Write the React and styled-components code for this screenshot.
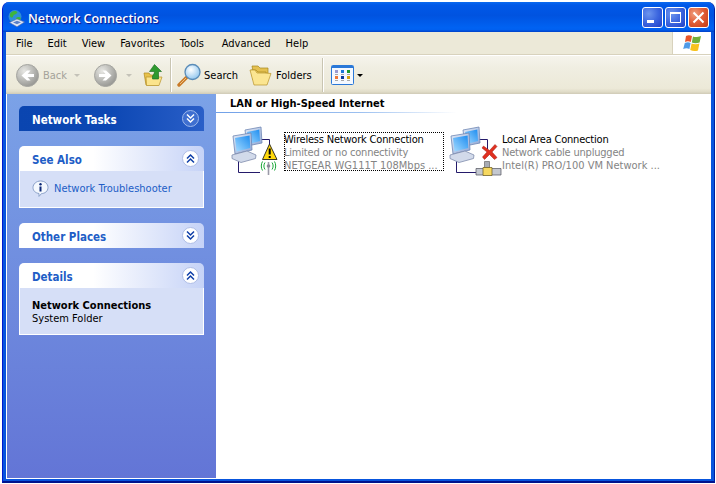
// App.jsx
import React from 'react';
import styled, { createGlobalStyle } from 'styled-components';

const GlobalStyle = createGlobalStyle`
  html, body {
    margin: 0;
    padding: 0;
    background: #fff;
    overflow: hidden;
  }
  * {
    box-sizing: border-box;
  }
`;

const FONT = `"DejaVu Sans Condensed", "Liberation Sans", sans-serif`;

const Page = styled.div`
  width: 716px;
  height: 484px;
  padding: 2px 1px 1px 2px;
  font-family: ${FONT};
  font-size: 11px;
  color: #000;
`;
const Window = styled.div`
  width: 713px;
  height: 481px;
  display: flex;
  flex-direction: column;
  background: #0855dd;
  border-left: 1px solid #0019cf;
  border-right: 1px solid #001ea0;
  border-bottom: 2px solid #00138c;
  border-radius: 7px 7px 0 0;
`;
const TitleBar = styled.div`
  height: 30px;
  flex: none;
  display: flex;
  align-items: center;
  padding: 0 5px 0 5px;
  border-radius: 7px 7px 0 0;
  background: linear-gradient(180deg, #0a6af0 0, #0058e8 3px, #0053e0 45%, #0062f2 85%, #0060f0 92%, #0040c8 100%);
`;
const TitleText = styled.span`
  margin-left: 3px;
  padding-top: 3px;
  font-family: "Open Sans", sans-serif;
  font-weight: 600;
  font-size: 12.5px;
  color: #fff;
  text-shadow: 1px 1px 1px #0f1089;
`;
const TitleButtons = styled.div`
  margin-left: auto;
  display: flex;
  gap: 2px;
  margin-top: 1px;
`;
const TitleButton = styled.div`
  width: 21px;
  height: 21px;
  border: 1px solid #fff;
  border-radius: 3px;
  display: flex;
  align-items: center;
  justify-content: center;
  background: ${(props) =>
    props.$close
      ? 'radial-gradient(circle at 30% 30%, #f0a080 0, #e2603a 45%, #c63a12 100%)'
      : 'radial-gradient(circle at 30% 30%, #6d95ee 0, #3c66df 50%, #2140c8 100%)'};
`;
const Inner = styled.div`
  flex: 1;
  min-height: 0;
  margin: 0 3px 2px 3px;
  display: flex;
  flex-direction: column;
  background: #fff;
`;
const MenuBar = styled.div`
  height: 23px;
  flex: none;
  display: flex;
  align-items: center;
  gap: 15px;
  padding-left: 10px;
  background: #ece9d8;
  border-bottom: 1px solid #d8d2bd;
`;
const MenuItem = styled.span`
  min-width: ${(props) => props.$minWidth || 0}px;
`;
const FlagBox = styled.div`
  margin-left: auto;
  width: 39px;
  height: 22px;
  background: #fff;
  border-left: 1px solid #d8d2bd;
  display: flex;
  align-items: center;
  justify-content: center;
`;
const Toolbar = styled.div`
  height: 39px;
  flex: none;
  display: flex;
  align-items: center;
  padding-left: 10px;
  background: linear-gradient(180deg, #f6f4ec 0, #f0eee2 30%, #ece9d8 85%, #e0dcc8 94%, #cfcab6 100%);
  border-top: 1px solid #fff;
`;
const ToolLabel = styled.span`
  color: ${(props) => (props.$disabled ? '#a4a29a' : '#000')};
  margin-left: ${(props) => props.$ml || 3}px;
`;
const Caret = styled.span`
  width: 0;
  height: 0;
  margin-left: ${(props) => props.$ml}px;
  margin-right: ${(props) => props.$mr || 0}px;
  border-left: 3px solid transparent;
  border-right: 3px solid transparent;
  border-top: 3px solid ${(props) => (props.$dark ? '#000' : '#c4c2b8')};
`;
const ToolSep = styled.span`
  width: 2px;
  height: 34px;
  margin: 0 ${(props) => props.$right}px 0 ${(props) => props.$left}px;
  background: #c9c5b2;
  border-right: 1px solid #fff;
`;
const Main = styled.div`
  flex: 1;
  min-height: 0;
  display: flex;
  border-left: 1px solid #fff;
  border-bottom: 1px solid #fff;
`;
const Sidebar = styled.div`
  width: 209px;
  flex: none;
  padding: 12px 12px 0 12px;
  display: flex;
  flex-direction: column;
  gap: 15px;
  background: linear-gradient(180deg, #7ba2e7 0, #6375d6 100%);
`;
const Task = styled.div`
  width: 185px;
`;
const TaskHeader = styled.div`
  height: 25px;
  display: flex;
  align-items: center;
  justify-content: space-between;
  padding: 0 5px 0 13px;
  border-radius: 5px 5px 0 0;
  font-weight: 700;
  color: ${(props) => (props.$primary ? '#fff' : '#215dc6')};
  background: ${(props) =>
    props.$primary
      ? 'linear-gradient(90deg, #0a45b0 0, #0d48b4 50%, #2a5fc8 100%)'
      : 'linear-gradient(90deg, #fff 0, #fff 40%, #c6d3f7 100%)'};
`;
const TaskTitle = styled.span`
  font-size: 11.5px;
  padding-top: 2px;
`;
const TaskBody = styled.div`
  background: #d6dff7;
  border: 1px solid #fff;
  border-top: 0;
  padding: ${(props) => props.$pad};
`;
const LinkRow = styled.div`
  display: flex;
  align-items: center;
  gap: 5px;
  color: #215dc6;
`;
const DetailName = styled.div`
  font-weight: 700;
  line-height: 13px;
`;
const DetailKind = styled.div`
  line-height: 13px;
`;
const Content = styled.div`
  flex: 1;
  min-width: 0;
  background: #fff;
`;
const GroupHeading = styled.div`
  height: 19px;
  padding: 3px 0 0 14px;
  font-weight: 700;
  font-size: 11px;
  line-height: 14px;
  border-bottom: 1px solid;
  border-image: linear-gradient(90deg, #70a0e8 0, #9cc0f0 60%, #fff 100%) 1;
  width: 240px;
`;
const Items = styled.div`
  display: flex;
  gap: 2px;
  padding: 12px 0 0 12px;
`;
const Item = styled.div`
  width: 216px;
  height: 52px;
  display: flex;
  align-items: center;
`;
const ItemIcon = styled.div`
  width: 56px;
  height: 52px;
  flex: none;
`;
const ItemText = styled.div`
  width: 160px;
  height: 39px;
  padding-top: 1px;
  outline: ${(props) => (props.$focused ? '1px dotted #000' : 'none')};
  outline-offset: -1px;
`;
const ItemLine = styled.div`
  height: 13px;
  line-height: 13px;
  white-space: nowrap;
  letter-spacing: ${(props) => (props.$tight ? '-0.2px' : '0')};
  color: ${(props) => (props.$muted ? '#848484' : '#000')};
`;
const Svg = styled.svg`
  display: block;
  flex: none;
  margin: ${(props) => props.$margin || '0'};
`;

const Chevrons = ({ up, primary }) => {
  const color = primary ? '#fff' : '#0f3fa8';
  const a = up ? 'M5 8.5 8.5 5 12 8.5M5 12.5 8.5 9 12 12.5' : 'M5 4.5 8.5 8 12 4.5M5 8.5 8.5 12 12 8.5';
  return (
    <Svg width="17" height="17" viewBox="0 0 17 17">
      <circle cx="8.5" cy="8.5" r="8" fill={primary ? '#3f6fd0' : '#fff'} stroke={primary ? '#9db8ea' : '#aebde6'} />
      <path d={a} fill="none" stroke={color} strokeWidth="1.5" />
    </Svg>
  );
};

const SectionTask = ({ title, primary, up, children, pad }) => (
  <Task>
    <TaskHeader $primary={primary}>
      <TaskTitle>{title}</TaskTitle>
      <Chevrons up={up} primary={primary} />
    </TaskHeader>
    {children && <TaskBody $pad={pad}>{children}</TaskBody>}
  </Task>
);

const XpLogo = () => (
  <Svg width="20" height="18" viewBox="0 0 20 18">
    <path d="M4 2C6 .8 8 1 10 2L8.8 8C6.8 7 5 7 3 8Z" fill="#e8552a" />
    <path d="M11 2.4C13 3.4 15 3.4 19 2L17.6 8.4C15 9.4 12 9.4 9.8 8.4Z" fill="#6fb03a" />
    <path d="M2.8 9C5 8 7 8 8.6 9L7.4 15C5.5 14 3.4 14 1.2 15Z" fill="#4f9be8" />
    <path d="M9.6 9.4C12 10.4 15 10.4 17.4 9.4L16 16.4C13.5 17.4 10.5 17.2 8.2 16Z" fill="#f8c21c" />
  </Svg>
);

const TitleIcon = () => (
  <Svg width="17" height="17" viewBox="0 0 17 17" $margin="3px 0 0 0">
    <circle cx="7" cy="6.5" r="6.5" fill="#2f8fd8" />
    <path d="M2 4C3.5.8 8 .2 9.4 2.5 8 5 5 4 5 7 3 8.5 1.4 6.5 2 4ZM8 8C10 6.5 12 7 13 8.5 11.5 11 9 11 8 8Z" fill="#3fb53a" />
    <path d="M1.5 12.5 9 9 16.5 12 9 16.8Z" fill="#dfe7f5" stroke="#5a6fa8" strokeWidth=".6" />
    <path d="M5 12.5 9 10.8 13 12.2 9 14.2Z" fill="#5a80c8" />
  </Svg>
);

const NavButton = ({ flip }) => (
  <Svg width="23" height="23" viewBox="0 0 23 23">
    <defs>
      <radialGradient id="navGrey" cx="35%" cy="30%" r="80%">
        <stop offset="0" stopColor="#e8e8e4" />
        <stop offset="1" stopColor="#8f8f8b" />
      </radialGradient>
    </defs>
    <circle cx="11.5" cy="11.5" r="11" fill="url(#navGrey)" stroke="#a5a5a0" />
    <path
      d={flip ? 'M5 10H11.5L8.5 6.5H12L17.5 11.5 12 16.5H8.5L11.5 13H5Z' : 'M18 10H11.5L14.5 6.5H11L5.5 11.5 11 16.5H14.5L11.5 13H18Z'}
      fill="#fff"
    />
  </Svg>
);

const FolderUp = () => (
  <Svg width="20" height="23" viewBox="0 0 20 23">
    <path d="M1 9H6L7.5 11H15V21H3Z" fill="#e8c24a" stroke="#b08a20" strokeWidth=".7" />
    <path d="M3 13H19L16 21.5H3.5Z" fill="#fbe48c" stroke="#b8922a" strokeWidth=".7" />
    <path d="M11.5 .5 18.5 7.5H15.5V15H9.5V12C10 11 11.5 10 11.5 7.5H6.5Z" fill="#2f9a2f" stroke="#166a1c" strokeWidth=".6" />
  </Svg>
);

const SearchIcon = () => (
  <Svg width="25" height="25" viewBox="0 0 25 25">
    <defs>
      <radialGradient id="lens" cx="40%" cy="35%" r="70%">
        <stop offset="0" stopColor="#fff" />
        <stop offset="1" stopColor="#8cc4ee" />
      </radialGradient>
    </defs>
    <path d="M9.5 14.5 2 22" stroke="#c87a28" strokeWidth="3.4" strokeLinecap="round" />
    <path d="M9 15 3 21" stroke="#f0c080" strokeWidth="1" />
    <circle cx="15.5" cy="9" r="7.5" fill="url(#lens)" stroke="#5a8cb8" strokeWidth="1.3" />
  </Svg>
);

const FoldersIcon = () => (
  <Svg width="23" height="23" viewBox="0 0 23 23" $margin="0 0 0 11px">
    <path d="M3 2H9L11 4H19V13H5Z" fill="#e4c050" stroke="#a8861e" strokeWidth=".7" />
    <path d="M2 6H7L9 8H17V16H4Z" fill="#f0d268" stroke="#a8861e" strokeWidth=".7" />
    <path d="M1 6H6L8 9H16L22 9.5 18 21H5Z" fill="#fbe591" stroke="#b8922a" strokeWidth=".7" />
  </Svg>
);

const ViewsIcon = () => {
  const cells = ['#9a9ad0', '#1c78d8', '#1c9a30', '#f07838', '#0c3a9a', '#d8a010'];
  return (
    <Svg width="23" height="20" viewBox="0 0 23 20">
      <rect x=".5" y=".5" width="22" height="19" rx="1" fill="#f4f8ff" stroke="#2a78d8" />
      <rect x="1" y="1" width="21" height="2" fill="#2a78d8" />
      {cells.map((c, i) => (
        <rect key={c} x={4 + (i % 3) * 6} y={5 + Math.floor(i / 3) * 6} width="3" height="3" fill={c} />
      ))}
      <path d="M4 9.5H7M10 9.5H13M16 9.5H19M4 15.5H7M10 15.5H13M16 15.5H19" stroke="#a8a8a8" />
    </Svg>
  );
};

const InfoIcon = () => (
  <Svg width="17" height="17" viewBox="0 0 17 17">
    <path d="M8.5 1C12.6 1 16 3.6 16 7.5S12.6 13.6 9.5 13.6L7 16.4V13.5C3.6 13 1 11 1 7.5S4.4 1 8.5 1Z" fill="#f4f8fe" stroke="#8aa0c8" />
    <path d="M8.5 6.5V11.5" stroke="#0e2a78" strokeWidth="2" />
    <circle cx="8.5" cy="4.2" r="1.2" fill="#0e2a78" />
  </Svg>
);

const Computers = ({ id }) => (
  <g>
    <defs>
      <linearGradient id={id} x1="0" y1="1" x2="1" y2="0">
        <stop offset="0" stopColor="#a6dcff" />
        <stop offset="1" stopColor="#1c8cf0" />
      </linearGradient>
      <linearGradient id={`${id}f`} x1="0" y1="0" x2="1" y2="1">
        <stop offset="0" stopColor="#e4ecf8" />
        <stop offset="1" stopColor="#8fa6d4" />
      </linearGradient>
    </defs>
    <path d="M32 14.5H41.5V24M10.5 36V47.5H32" fill="none" stroke="#241a6a" />
    <path d="M17 5 33 2 34 18 19 21Z" fill={`url(#${id}f)`} stroke="#6f86b4" strokeWidth=".8" />
    <path d="M19 7 31.3 4.6 32 16 21 19Z" fill={`url(#${id})`} />
    <path d="M5 11 23 8 24 25 7 29Z" fill={`url(#${id}f)`} stroke="#6f86b4" strokeWidth=".8" />
    <path d="M7 13 21.6 10.5 22.2 23 8.5 26.5Z" fill={`url(#${id})`} />
    <path d="M4 30 19 26 28 30 27.5 33.5 13 37.5 4 33.5Z" fill="#d2daea" stroke="#7f8cac" strokeWidth=".8" />
  </g>
);

const WirelessIcon = () => (
  <Svg width="56" height="52" viewBox="0 0 56 52">
    <Computers id="scrA" />
    <path d="M41.5 19 49 34.5H34.5Z" fill="#ffd80a" stroke="#3a3520" strokeLinejoin="round" />
    <path d="M41.7 23.5V29.5M41.7 31V33" stroke="#000" strokeWidth="2" />
    <path d="M40.5 37V50" stroke="#9a9aa8" strokeWidth="1.6" />
    <circle cx="40.5" cy="41" r="1.8" fill="#8a8a98" />
    <path d="M37 37.5C35.5 39.5 35.5 42.5 37 44.5M44 37.5C45.5 39.5 45.5 42.5 44 44.5M34.5 36.5C32.9 39 32.9 43 34.5 45.5M46.5 36.5C48.1 39 48.1 43 46.5 45.5" fill="none" stroke="#1aa83a" />
  </Svg>
);

const WiredIcon = () => (
  <Svg width="56" height="52" viewBox="0 0 56 52">
    <Computers id="scrB" />
    <path d="M38.5 36.5H43.5V43H38.5Z" fill="#a8acb4" stroke="#555" strokeWidth=".6" />
    <path d="M30 43.5H55V50H30Z" fill="#c4c8d0" stroke="#50525c" strokeWidth=".7" />
    <path d="M37 42.5H46V50.5H37Z" fill="#f6d860" stroke="#6a5a20" strokeWidth=".7" />
    <path d="M37.5 21 43.5 25.5 49 19.5 51 21.5 46 27 51 32.5 48.5 34.5 43.5 29.5 38.5 34.5 36.5 32 41 27 36 23Z" fill="#e03020" stroke="#a01810" strokeWidth=".5" />
  </Svg>
);

const App = () => {
  return (
    <Page>
      <GlobalStyle />
      <Window>
        <TitleBar>
          <TitleIcon />
          <TitleText>Network Connections</TitleText>
          <TitleButtons>
            <TitleButton>
              <Svg width="19" height="19" viewBox="0 0 19 19">
                <rect x="4" y="12" width="7" height="3" fill="#fff" />
              </Svg>
            </TitleButton>
            <TitleButton>
              <Svg width="19" height="19" viewBox="0 0 19 19">
                <path d="M4.5 5.5H14.5V14.5H4.5ZM4 4.5H15" fill="none" stroke="#fff" />
                <rect x="4" y="4" width="11" height="2" fill="#fff" />
              </Svg>
            </TitleButton>
            <TitleButton $close>
              <Svg width="19" height="19" viewBox="0 0 19 19">
                <path d="M4.5 4.5 14.5 14.5M14.5 4.5 4.5 14.5" stroke="#fff" strokeWidth="2" />
              </Svg>
            </TitleButton>
          </TitleButtons>
        </TitleBar>
        <Inner>
          <MenuBar>
            <MenuItem>File</MenuItem>
            <MenuItem>Edit</MenuItem>
            <MenuItem>View</MenuItem>
            <MenuItem>Favorites</MenuItem>
            <MenuItem $minWidth={27}>Tools</MenuItem>
            <MenuItem>Advanced</MenuItem>
            <MenuItem>Help</MenuItem>
            <FlagBox>
              <XpLogo />
            </FlagBox>
          </MenuBar>
          <Toolbar>
            <NavButton />
            <ToolLabel $disabled $ml={4}>Back</ToolLabel>
            <Caret $ml={7} $mr={14} />
            <NavButton flip />
            <Caret $ml={9} $mr={11} />
            <FolderUp />
            <ToolSep $left={7} $right={5} />
            <SearchIcon />
            <ToolLabel $ml={2}>Search</ToolLabel>
            <FoldersIcon />
            <ToolLabel $ml={4}>Folders</ToolLabel>
            <ToolSep $left={10} $right={7} />
            <ViewsIcon />
            <Caret $ml={3} $dark />
          </Toolbar>
          <Main>
            <Sidebar>
              <SectionTask title="Network Tasks" primary />
              <SectionTask title="See Also" up pad="9px 0 10px 12px">
                <LinkRow>
                  <InfoIcon />
                  Network Troubleshooter
                </LinkRow>
              </SectionTask>
              <SectionTask title="Other Places" />
              <SectionTask title="Details" up pad="11px 0 9px 12px">
                <DetailName>Network Connections</DetailName>
                <DetailKind>System Folder</DetailKind>
              </SectionTask>
            </Sidebar>
            <Content>
              <GroupHeading>LAN or High-Speed Internet</GroupHeading>
              <Items>
                <Item>
                  <ItemIcon>
                    <WirelessIcon />
                  </ItemIcon>
                  <ItemText $focused>
                    <ItemLine $tight>Wireless Network Connection</ItemLine>
                    <ItemLine $tight $muted>Limited or no connectivity</ItemLine>
                    <ItemLine $muted>NETGEAR WG111T 108Mbps ...</ItemLine>
                  </ItemText>
                </Item>
                <Item>
                  <ItemIcon>
                    <WiredIcon />
                  </ItemIcon>
                  <ItemText>
                    <ItemLine $tight>Local Area Connection</ItemLine>
                    <ItemLine $tight $muted>Network cable unplugged</ItemLine>
                    <ItemLine $muted>Intel(R) PRO/100 VM Network ...</ItemLine>
                  </ItemText>
                </Item>
              </Items>
            </Content>
          </Main>
        </Inner>
      </Window>
    </Page>
  );
};

export default App;
